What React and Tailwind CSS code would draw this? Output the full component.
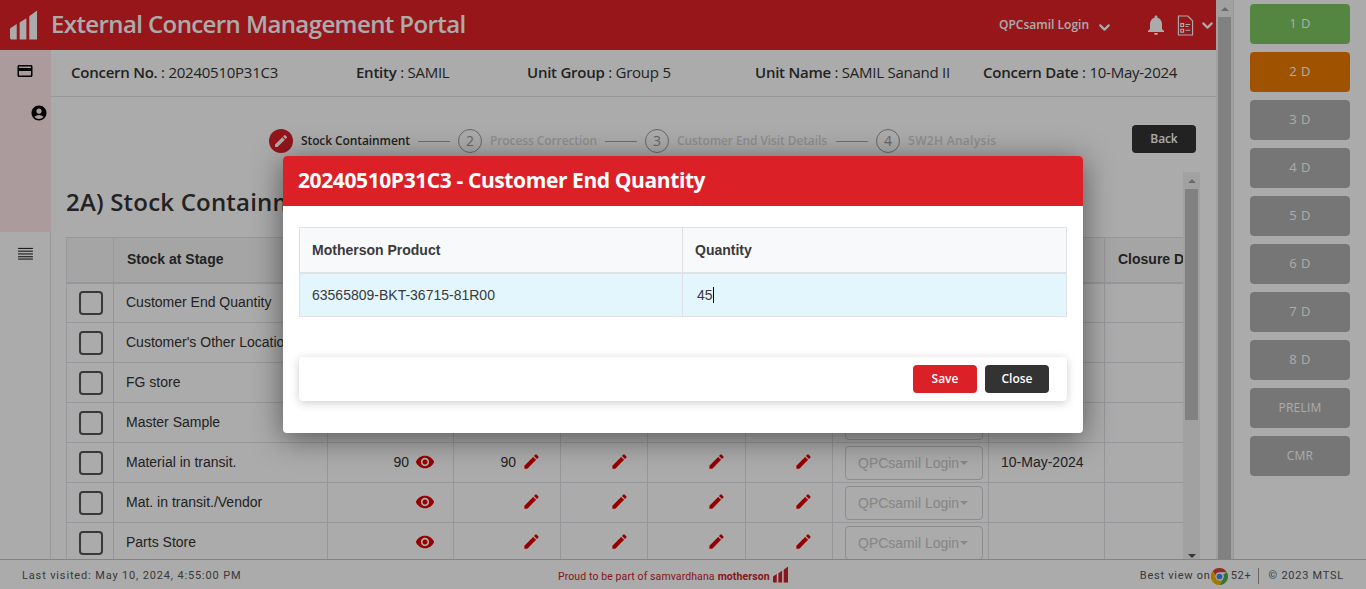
import React from 'react';
import { MdEdit, MdRemoveRedEye, MdCreditCard, MdAccountCircle, MdNotifications } from 'react-icons/md';
import { ChevronDown } from 'lucide-react';

const heading = "font-['Open_Sans',sans-serif]";
const arial = "font-['Liberation_Sans',Arial,sans-serif]";

const steps = [
    { n: '2', label: 'Process Correction', w: 'w-[107px]' },
    { n: '3', label: 'Customer End Visit Details', w: 'w-[151px]' },
    { n: '4', label: '5W2H Analysis', w: 'w-[89px] tracking-[0.3px]' },
];

const stages = ['1 D', '2 D', '3 D', '4 D', '5 D', '6 D', '7 D', '8 D', 'PRELIM', 'CMR'];

const rows = [
    { name: 'Customer End Quantity' },
    { name: "Customer's Other Location" },
    { name: 'FG store' },
    { name: 'Master Sample' },
    { name: 'Material in transit.', a: '90', b: '90', date: '10-May-2024' },
    { name: 'Mat. in transit./Vendor' },
    { name: 'Parts Store' },
];

const Logo = ({ className }) => (
    <svg viewBox="0 0 28 30" className={className} fill="currentColor">
        <path d="M0 18.5 L7 14 V30 H1.5 Q0 30 0 28.5 Z" />
        <path d="M10 12.5 L17 8 V30 H10 Z" />
        <path d="M20 6 L28 0 V30 H20 Z" />
    </svg>
);

const ChromeIcon = () => (
    <svg viewBox="0 0 16 16" className="w-[17px] h-[17px] shrink-0">
        <path d="M8 0a8 8 0 0 1 6.93 4H8a4 4 0 0 0-3.8 2.8L1.6 3A8 8 0 0 1 8 0z" fill="#db4437" />
        <path d="M14.93 4A8 8 0 0 1 8 16l3.4-6A4 4 0 0 0 11.5 6z" fill="#4caf50" />
        <path d="M1.6 3A8 8 0 0 0 8 16l3-5.3A4 4 0 0 1 4.3 7z" fill="#f4b400" />
        <circle cx="8" cy="8" r="3.6" fill="#fff" />
        <circle cx="8" cy="8" r="2.7" fill="#4285f4" />
    </svg>
);

const Th = ({ className = '', children }) => (
    <th className={`border border-[#dee2e6] border-b-2 bg-[#f7f7f7] px-[13px] pb-[2px] text-left text-sm font-bold text-[#333] ${className}`}>
        {children}
    </th>
);

const Td = ({ className = '', children }) => (
    <td className={`border border-[#dee2e6] px-[12px] pb-[2px] text-sm text-[#333] ${className}`}>{children}</td>
);

const Pencil = ({ value }) => (
    <div className="flex items-center justify-end gap-[6px]">
        {value && <span>{value}</span>}
        <MdEdit className="w-[19px] h-[19px] text-[#e00000]" />
    </div>
);

const App = () => {
    return (
        <div className={`relative w-[1366px] h-[589px] overflow-hidden bg-white flex flex-col ${heading}`}>
            <div className="flex flex-1 min-h-0">
                <div className="w-[1216px] flex flex-col">
                    {/* Top bar */}
                    <header className="h-[50px] shrink-0 bg-[#e02128] text-white flex items-center">
                        <div className="w-[51px] h-full flex items-center pl-[10px]">
                            <Logo className="w-[27px] h-[30px]" />
                        </div>
                        <h1 className="text-[24px] font-semibold tracking-[-0.6px] whitespace-nowrap pb-[2px]">External Concern Management Portal</h1>
                        <div className="ml-auto flex items-center">
                            <span className="text-xs font-semibold">QPCsamil Login</span>
                            <ChevronDown className="w-[17px] h-[17px] ml-[7px] mt-1" strokeWidth={3} />
                            <MdNotifications className="w-[24px] h-[24px] ml-[31px]" />
                            <svg viewBox="0 0 18 22" className="w-[17px] h-[21px] ml-[9px]" fill="none" stroke="currentColor" strokeWidth="1.2">
                                <path d="M1.5 1h10l5 5v15h-15z" />
                                <path d="M4 9h3v3h-3zM4 15h3v3h-3zM9 10h5M9 12h3M9 16h5" />
                            </svg>
                            <ChevronDown className="w-[17px] h-[17px] ml-[5px]" strokeWidth={3} />
                        </div>
                    </header>

                    <div className="flex flex-1 min-h-0">
                        {/* Sidebar */}
                        <aside className="w-[51px] shrink-0 border-r border-[#dee2e6] flex flex-col">
                            <div className="w-[51px] h-[182px] bg-[#ffe8ea] text-black flex flex-col">
                                <MdCreditCard className="w-[18px] h-[18px] ml-[16px] mt-[12px]" />
                                <MdAccountCircle className="w-[18px] h-[18px] ml-[30px] mt-[24px]" />
                            </div>
                            <svg viewBox="0 0 16 14" className="w-[15px] h-[13px] ml-[18px] mt-[15px]" stroke="black" strokeWidth="1">
                                <path d="M0 1.5h16M0 4.5h16M0 7.5h16M0 10.5h16M0 13h16" />
                            </svg>
                        </aside>

                        <main className="flex-1 min-w-0 flex flex-col">
                            {/* Concern summary */}
                            <div className="h-[47px] shrink-0 border-b border-[#dee2e6] pl-[20px] pb-[2px] flex items-center text-[15px] tracking-[-0.25px] text-[#333] whitespace-nowrap">
                                <div className="w-[285px]"><b className="font-semibold">Concern No.</b> : 20240510P31C3</div>
                                <div className="w-[171px]"><b className="font-semibold">Entity</b> : SAMIL</div>
                                <div className="w-[228px]"><b className="font-semibold">Unit Group</b> : Group 5</div>
                                <div className="w-[228px]"><b className="font-semibold">Unit Name</b> : SAMIL Sanand II</div>
                                <div><b className="font-semibold">Concern Date</b> : 10-May-2024</div>
                            </div>

                            {/* Stepper */}
                            <div className="h-[75px] shrink-0 flex items-start pt-[28px] pl-[218px] text-xs font-semibold tracking-[-0.1px] whitespace-nowrap">
                                <div className="w-6 h-6 rounded-full bg-[#d8212a] flex items-center justify-center text-white mt-[4px]">
                                    <MdEdit className="w-4 h-4" />
                                </div>
                                <span className="w-[109px] ml-2 mt-[8px] text-[#333]">Stock Containment</span>
                                {steps.map((s) => (
                                    <div key={s.n} className="flex items-start text-[#d4d4d4]">
                                        <div className="w-8 h-px bg-[#a8a8a8] ml-2 mt-[16px]"></div>
                                        <div className="w-6 h-6 rounded-full border border-[#999] flex items-center justify-center text-sm font-normal text-[#999] ml-2 mt-[4px]">{s.n}</div>
                                        <span className={`${s.w} ml-2 mt-[8px]`}>{s.label}</span>
                                    </div>
                                ))}
                                <button className="ml-auto mr-[20px] w-16 h-7 rounded-[4px] bg-[#333] text-white text-xs font-semibold">Back</button>
                            </div>

                            {/* Scrolling section */}
                            <div className="flex-1 min-h-0 flex pl-[15px] pr-[16px]">
                                <div className="flex-1 min-w-0 overflow-hidden">
                                    <h2 className="text-[24px] leading-[30px] font-semibold tracking-[0.2px] text-[#333] mt-[15px] mb-[20px] whitespace-nowrap">2A) Stock Containment</h2>
                                    <table className={`w-[1150px] table-fixed border-collapse ${arial}`}>
                                        <colgroup>
                                            <col className="w-[47px]" />
                                            <col className="w-[214px]" />
                                            <col className="w-[126px]" />
                                            <col className="w-[107px]" />
                                            <col className="w-[87px]" />
                                            <col className="w-[98px]" />
                                            <col className="w-[87px]" />
                                            <col className="w-[156px]" />
                                            <col className="w-[116px]" />
                                            <col className="w-[112px]" />
                                        </colgroup>
                                        <thead>
                                            <tr className="h-[45px]">
                                                <Th></Th>
                                                <Th>Stock at Stage</Th>
                                                <Th>Customer</Th>
                                                <Th>Qty</Th>
                                                <Th>OK</Th>
                                                <Th>NG</Th>
                                                <Th>Rework</Th>
                                                <Th>Responsibility</Th>
                                                <Th>Target Date</Th>
                                                <Th className="whitespace-nowrap">Closure Date</Th>
                                            </tr>
                                        </thead>
                                        <tbody>
                                            {rows.map((r) => (
                                                <tr key={r.name} className="h-10">
                                                    <Td className="!p-0">
                                                        <div className="w-6 h-6 ml-[12px] rounded-[4px] border-2 border-[#555]"></div>
                                                    </Td>
                                                    <Td className="whitespace-nowrap overflow-hidden">{r.name}</Td>
                                                    <Td className="!pr-[18px]">
                                                        <div className="flex items-center justify-end gap-[6px]">
                                                            {r.a && <span>{r.a}</span>}
                                                            <MdRemoveRedEye className="w-[20px] h-[20px] text-[#e00000]" />
                                                        </div>
                                                    </Td>
                                                    <Td className="!pr-[19px]"><Pencil value={r.b} /></Td>
                                                    <Td className="!pr-[18px]"><Pencil /></Td>
                                                    <Td className="!pr-[19px]"><Pencil /></Td>
                                                    <Td className="!pr-[19px]"><Pencil /></Td>
                                                    <Td className="!px-[12px] !py-0">
                                                        <div className="h-[34px] w-[138px] px-[12px] rounded-[4px] border border-[#d2d2d2] flex items-center text-[#c8c8c8] whitespace-nowrap overflow-hidden">
                                                            QPCsamil Login
                                                            <span className="ml-[1px] w-0 h-0 border-x-[4px] border-x-transparent border-t-[4px] border-t-[#c8c8c8]"></span>
                                                        </div>
                                                    </Td>
                                                    <Td>{r.date}</Td>
                                                    <Td></Td>
                                                </tr>
                                            ))}
                                        </tbody>
                                    </table>
                                </div>
                                {/* inner scrollbar */}
                                <div className="w-[17px] shrink-0 bg-[#f1f1f1] flex flex-col items-center">
                                    <div className="h-[17px] flex items-center justify-center">
                                        <span className="w-0 h-0 border-x-[4px] border-x-transparent border-b-[4px] border-b-[#a0a0a0]"></span>
                                    </div>
                                    <div className="w-[13px] h-[231px] bg-[#c1c1c1]"></div>
                                    <div className="mt-auto h-[7px] flex items-center justify-center">
                                        <span className="w-0 h-0 border-x-[4px] border-x-transparent border-t-[4px] border-t-[#505050]"></span>
                                    </div>
                                </div>
                            </div>
                        </main>
                    </div>
                </div>

                {/* Page scrollbar */}
                <div className="w-[17px] shrink-0 bg-[#f1f1f1] flex flex-col items-center">
                    <div className="h-[17px] flex items-center justify-center">
                        <span className="w-0 h-0 border-x-[4px] border-x-transparent border-b-[4px] border-b-[#a0a0a0]"></span>
                    </div>
                    <div className="w-[13px] flex-1 bg-[#c1c1c1]"></div>
                </div>

                {/* Stage buttons */}
                <nav className="flex-1 border-l border-[#dee2e6] pl-[16px] pt-[4px] flex flex-col gap-2">
                    {stages.map((s, i) => (
                        <div
                            key={s}
                            className={`w-[100px] h-10 rounded-[4px] flex items-center justify-center text-white ${i < 8 ? 'text-[13px] tracking-[0.5px]' : 'text-xs font-medium tracking-[0.2px]'} ${i === 0 ? 'bg-[#7ec863]' : i === 1 ? 'bg-[#ed7b00]' : 'bg-[#b0b0b0]'}`}
                        >
                            {s}
                        </div>
                    ))}
                </nav>
            </div>

            {/* Footer */}
            <footer className="relative z-0 h-[30px] shrink-0 bg-white border-t border-[#c4c4c4] flex items-center pt-[3px] text-[11px] text-[#555] font-['Roboto',sans-serif] tracking-[0.85px]">
                <div className="w-[558px] pl-[22px]">Last visited: May 10, 2024, 4:55:00 PM</div>
                <div className="flex items-center text-[#c9232b] text-[10.5px] tracking-[0.1px] mt-[1px]">
                    <span>Proud to be part of samvardhana</span>
                    <b className="ml-[3px]">motherson</b>
                    <Logo className="w-[15px] h-[17px] ml-[3px] -mt-[4px]" />
                </div>
                <div className="ml-auto flex items-center pr-[22px] tracking-[0.75px]">
                    <span>Best view on</span>
                    <ChromeIcon />
                    <span className="ml-[3px]">52+</span>
                    <span className="w-px h-4 bg-[#999] ml-[6px] mr-[10px]"></span>
                    <span>© 2023 MTSL</span>
                </div>
            </footer>

            {/* Backdrop and modal */}
            <div className="absolute inset-0 bg-black/[.33]"></div>
            <div className="absolute left-[283px] top-[156px] w-[800px] h-[277px] rounded-[4px] bg-white shadow-[0_5px_30px_rgba(0,0,0,0.5)] overflow-hidden">
                <div className="h-[50px] bg-[#dc2028] text-white flex items-center px-[15px] text-[21px] font-bold tracking-[-0.4px]">
                    20240510P31C3 - Customer End Quantity
                </div>
                <div className="px-4 pt-[21px]">
                    <table className={`w-[768px] table-fixed border-collapse text-sm text-[#3a3a3a] ${arial}`}>
                        <thead>
                            <tr className="h-[45px] bg-[#f8f9fa]">
                                <th className="w-[383px] border border-[#dee2e6] border-b-2 px-[12px] text-left font-bold">Motherson Product</th>
                                <th className="border border-[#dee2e6] border-b-2 px-[12px] text-left font-bold">Quantity</th>
                            </tr>
                        </thead>
                        <tbody>
                            <tr className="h-[44px] bg-[#e3f5fd]">
                                <td className="border border-[#dee2e6] px-[12px]">63565809-BKT-36715-81R00</td>
                                <td className="border border-[#dee2e6] px-[14px]">
                                    <span className="border-r border-black">45</span>
                                </td>
                            </tr>
                        </tbody>
                    </table>
                    <div className="mt-[40px] h-[44px] rounded-[4px] bg-white shadow-[0_2px_10px_rgba(0,0,0,0.2)] flex items-center justify-end gap-2 pr-[18px]">
                        <button className="w-16 h-7 rounded-[4px] bg-[#dc2028] text-white text-xs font-semibold">Save</button>
                        <button className="w-16 h-7 rounded-[4px] bg-[#333] text-white text-xs font-semibold">Close</button>
                    </div>
                </div>
            </div>
        </div>
    );
};

export default App;
